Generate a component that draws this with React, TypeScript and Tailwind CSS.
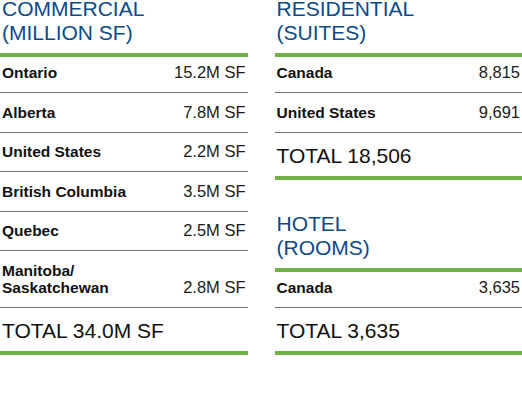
type Row = { label: string[]; value: string };

const commercial: Row[] = [
  { label: ["Ontario"], value: "15.2M SF" },
  { label: ["Alberta"], value: "7.8M SF" },
  { label: ["United States"], value: "2.2M SF" },
  { label: ["British Columbia"], value: "3.5M SF" },
  { label: ["Quebec"], value: "2.5M SF" },
  { label: ["Manitoba/", "Saskatchewan"], value: "2.8M SF" },
];

const residential: Row[] = [
  { label: ["Canada"], value: "8,815" },
  { label: ["United States"], value: "9,691" },
];

const hotel: Row[] = [{ label: ["Canada"], value: "3,635" }];

function Section({ title, rows, total }: { title: string[]; rows: Row[]; total: string }) {
  return (
    <section>
      <h2 className="pl-[2px] text-[21px] leading-[24px] text-[#0d4a86]">
        {title.map((t) => (
          <div key={t}>{t}</div>
        ))}
      </h2>
      <div className="mt-2 h-[4px] bg-[#70b244]" />
      {rows.map((r, i) => (
        <div
          key={r.label.join(" ")}
          className={
            "flex items-end justify-between border-b border-[#707070] pb-[10.5px] pl-[2px] pr-[2px] leading-[17.5px] " +
            (i === 0 ? "pt-[7px]" : "pt-[10.5px]")
          }
        >
          <div className="text-[15.5px] font-bold text-[#111]">
            {r.label.map((l) => (
              <div key={l}>{l}</div>
            ))}
          </div>
          <div className="text-[16.5px] text-[#1a1a1a]">{r.value}</div>
        </div>
      ))}
      <div className="pt-[11px] pb-[8px] pl-[2px] text-[21px] leading-[24px] text-[#111]">{total}</div>
      <div className="h-[4px] bg-[#70b244]" />
    </section>
  );
}

export default function App() {
  return (
    <div className="h-[400px] w-[522px] overflow-hidden bg-white font-['Liberation_Sans',Arial,sans-serif]">
      <div className="-mt-[3px] grid grid-cols-2 gap-x-[27px]">
        <Section title={["COMMERCIAL", "(MILLION SF)"]} rows={commercial} total="TOTAL 34.0M SF" />
        <div className="flex flex-col gap-[32px]">
          <Section title={["RESIDENTIAL", "(SUITES)"]} rows={residential} total="TOTAL 18,506" />
          <Section title={["HOTEL", "(ROOMS)"]} rows={hotel} total="TOTAL 3,635" />
        </div>
      </div>
    </div>
  );
}
